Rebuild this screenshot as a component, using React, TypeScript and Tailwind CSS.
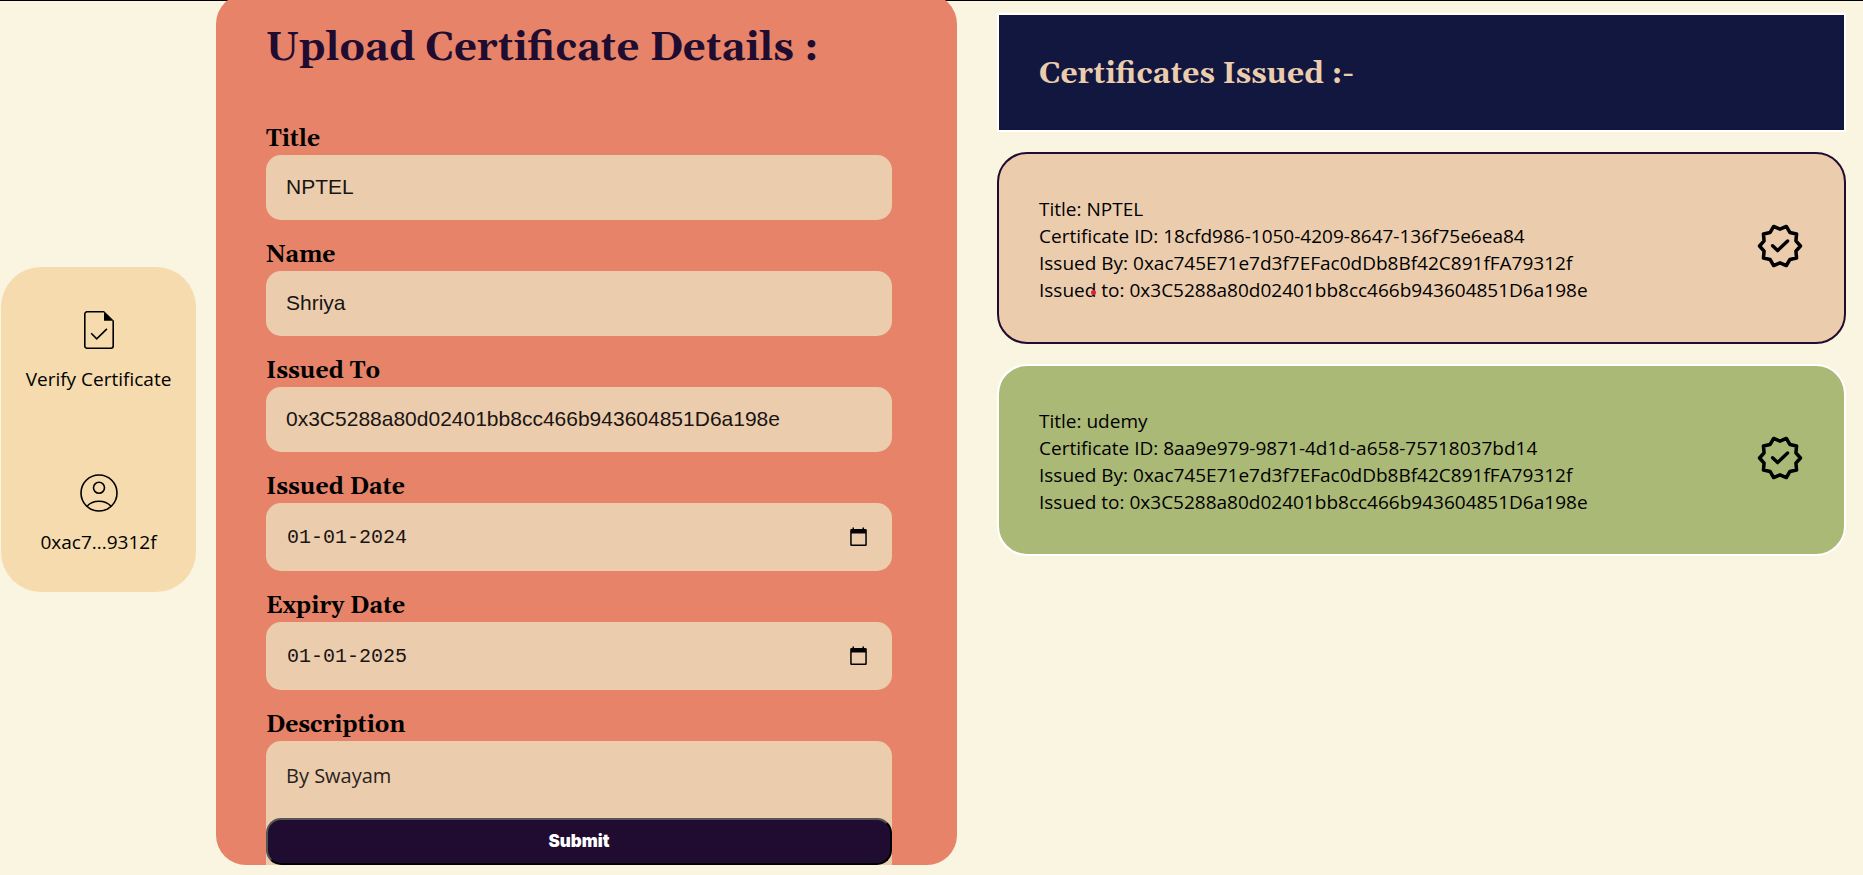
import React from "react";

type Certificate = {
  title: string;
  id: string;
  issuedBy: string;
  issuedTo: string;
  tone: string;
  marked?: boolean;
};

const certificates: Certificate[] = [
  {
    title: "NPTEL",
    id: "18cfd986-1050-4209-8647-136f75e6ea84",
    issuedBy: "0xac745E71e7d3f7EFac0dDb8Bf42C891fFA79312f",
    issuedTo: "0x3C5288a80d02401bb8cc466b943604851D6a198e",
    tone: "border-[#200c30] bg-[#ebcdae]",
    marked: true,
  },
  {
    title: "udemy",
    id: "8aa9e979-9871-4d1d-a658-75718037bd14",
    issuedBy: "0xac745E71e7d3f7EFac0dDb8Bf42C891fFA79312f",
    issuedTo: "0x3C5288a80d02401bb8cc466b943604851D6a198e",
    tone: "border-white bg-[#abb977]",
  },
];

function FileCheckIcon() {
  return (
    <svg viewBox="0 0 40 40" className="size-10" fill="none" stroke="#000" strokeWidth="1.6" aria-hidden="true">
      <path d="M25 1.8H8A2.2 2.2 0 0 0 5.8 4v32A2.2 2.2 0 0 0 8 38.2h24a2.2 2.2 0 0 0 2.2-2.2V10.5" />
      <path d="M25 1v9.8h9.9z" fill="#000" stroke="none" />
      <path d="m12.2 23.3 5.5 5.6 10.2-10" />
    </svg>
  );
}

function UserCircleIcon() {
  return (
    <svg viewBox="0 0 40 40" className="size-10" fill="none" stroke="#000" strokeWidth="1.6" aria-hidden="true">
      <circle cx="20" cy="20" r="18" />
      <circle cx="20" cy="14.7" r="5.5" />
      <path d="M8 33.2C11 30 15 28.300 20 28.300S29 30 32 33.2" />
    </svg>
  );
}

function VerifiedIcon() {
  return (
    <svg viewBox="0 0 24 24" className="mb-2 size-12 shrink-0" fill="none" stroke="#000" aria-label="Verified" role="img">
      <path
        transform="translate(12 12) scale(.93) translate(-12 -12)"
        strokeWidth="1.9"
        strokeLinejoin="round"
        d="M23 12 20.56 9.21 20.9 5.52 17.29 4.7 15.4 1.5 12 2.96 8.6 1.5 6.71 4.69 3.1 5.5 3.44 9.2 1 12 3.44 14.79 3.1 18.49 6.71 19.31 8.6 22.5 12 21.03 15.4 22.49 17.29 19.3 20.9 18.48 20.56 14.79Z"
      />
      <path d="m8.3 11.9 2.500 2.400 5-4.800" strokeWidth="1.7" strokeLinecap="round" strokeLinejoin="round" />
    </svg>
  );
}

function CalendarIcon() {
  return (
    <svg viewBox="0 0 20 20" className="size-5" aria-hidden="true">
      <path
        fillRule="evenodd"
        d="M4.500 .5H6V2h8.500V.5H16V2h1.500A1.300 1.300 0 0 1 18.800 3.300v14.400a1.300 1.300 0 0 1-1.300 1.300h-14a1.300 1.300 0 0 1-1.300-1.300V3.300A1.300 1.300 0 0 1 3.500 2h1zM3.700 6.500v11h13.600v-11z"
      />
    </svg>
  );
}

const labelStyle = "mb-1 block font-[Georgia,Gelasio,'DejaVu_Serif',serif] text-[23px] leading-[23px] font-bold text-black";

function TextField({ id, label, value }: { id: string; label: string; value: string }) {
  return (
    <div>
      <label htmlFor={id} className={labelStyle}>{label}</label>
      <input
        id={id}
        type="text"
        defaultValue={value}
        className="block h-[65px] w-full rounded-[15px] bg-[#ebcdae] px-5 pb-0.5 font-['Liberation_Sans',sans-serif] text-[21px] text-[#1a1412]"
      />
    </div>
  );
}

function DateField({ id, label, value }: { id: string; label: string; value: string }) {
  return (
    <div>
      <label htmlFor={id} className={labelStyle}>{label}</label>
      <div className="flex h-[68px] items-center rounded-[15px] bg-[#ebcdae] pr-6 pl-5">
        <input
          id={id}
          type="text"
          defaultValue={value}
          className="min-w-0 flex-1 px-px pt-0.5 font-['Liberation_Mono',monospace] text-[20px] text-[#1a1412]"
        />
        <button type="button" aria-label={`Choose ${label}`}>
          <CalendarIcon />
        </button>
      </div>
    </div>
  );
}

export default function App() {
  return (
    <div className="min-h-screen border-t border-black bg-[#faf5e1] font-['Open_Sans','Noto_Sans',sans-serif] text-black">
      <div className="-mt-[7px] flex gap-5 pr-[17px] pl-px">
        <nav className="flex w-[195px] shrink-0 flex-col gap-20 self-center rounded-[40px] bg-[#f5dbae] pt-[43px] pb-9">
          <a href="#verify" className="flex flex-col items-center gap-4 text-[19px] leading-[27px]">
            <FileCheckIcon />
            Verify Certificate
          </a>
          <a href="#account" className="flex flex-col items-center gap-4 text-[19px] leading-[27px]">
            <UserCircleIcon />
            0xac7...9312f
          </a>
        </nav>

        <div className="grid min-w-0 flex-1 grid-cols-[741fr_849fr] gap-10">
          <form className="overflow-hidden rounded-[30px] bg-[#e68369] pt-[31px] pr-[65px] pl-[50px]">
            <h1 className="font-[Georgia,Gelasio,'DejaVu_Serif',serif] text-[40px] leading-[48px] font-bold whitespace-nowrap text-[#200c30]">
              Upload Certificate Details :
            </h1>
            <div className="mt-[55px] flex flex-col gap-6">
              <TextField id="title" label="Title" value="NPTEL" />
              <TextField id="name" label="Name" value="Shriya" />
              <TextField id="issued-to" label="Issued To" value="0x3C5288a80d02401bb8cc466b943604851D6a198e" />
              <DateField id="issued-date" label="Issued Date" value="01-01-2024" />
              <DateField id="expiry-date" label="Expiry Date" value="01-01-2025" />
              <div>
                <label htmlFor="description" className={labelStyle}>Description</label>
                <textarea
                  id="description"
                  defaultValue="By Swayam"
                  className="block h-[124px] w-full resize-none rounded-t-[15px] bg-[#ebcdae] px-5 pt-5 text-[20px] leading-[30px] text-[#2a1f1c]"
                />
                <button
                  type="submit"
                  className="relative -mt-[47px] block h-[47px] w-full rounded-[15px] border-2 border-t-[#555] border-r-black border-b-black border-l-[#555] bg-[#200c30] font-[Inter,sans-serif] text-[17px] font-black text-white"
                >
                  Submit
                </button>
              </div>
            </div>
          </form>

          <section className="flex flex-col gap-5 pt-[19px]">
            <header className="border-2 border-white bg-[#121740] px-10 pt-[42px] pb-[38px]">
              <h2 className="font-[Georgia,Gelasio,'DejaVu_Serif',serif] text-[30px] leading-[35px] font-bold text-[#ebcdae]">
                Certificates Issued :-
              </h2>
            </header>
            {certificates.map((c) => (
              <article
                key={c.id}
                className={`flex items-center justify-between rounded-[30px] border-2 px-10 pt-[42px] pb-[38px] text-[19px] leading-[27px] ${c.tone}`}
              >
                <div>
                  <p>Title: {c.title}</p>
                  <p>Certificate ID: {c.id}</p>
                  <p>Issued By: {c.issuedBy}</p>
                  <p>
                    <span className="relative">
                      Issued
                      {c.marked && <span className="absolute right-0 bottom-2 size-[5px] rounded-full bg-[#dc2430]" />}
                    </span>{" "}
                    to: {c.issuedTo}
                  </p>
                </div>
                <VerifiedIcon />
              </article>
            ))}
          </section>
        </div>
      </div>
    </div>
  );
}
